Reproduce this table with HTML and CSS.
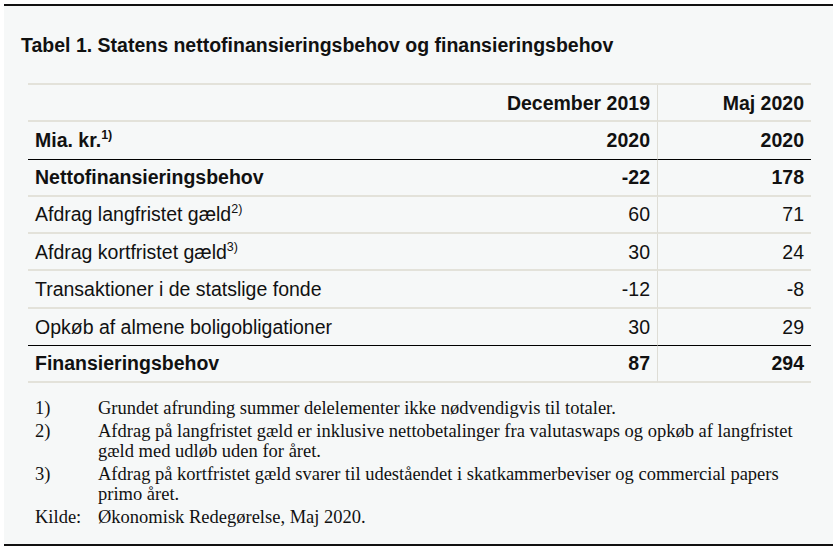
FILE: index.html
```html
<!DOCTYPE html>
<html lang="da">
<head>
<meta charset="utf-8">
<title>Tabel 1</title>
<link rel="stylesheet" href="styles.css">
</head>
<body>
<div class="figure">
  <h1 class="title">Tabel 1. Statens nettofinansieringsbehov og finansieringsbehov</h1>
  <table class="tbl">
    <colgroup>
      <col class="c-label">
      <col class="c-dec">
      <col class="c-maj">
    </colgroup>
    <tbody>
      <tr class="head">
        <td></td>
        <td class="num">December 2019</td>
        <td class="num div">Maj 2020</td>
      </tr>
      <tr class="head rule">
        <td>Mia. kr.<sup>1)</sup></td>
        <td class="num">2020</td>
        <td class="num div">2020</td>
      </tr>
      <tr class="bold">
        <td>Nettofinansieringsbehov</td>
        <td class="num">-22</td>
        <td class="num div">178</td>
      </tr>
      <tr>
        <td>Afdrag langfristet gæld<sup>2)</sup></td>
        <td class="num">60</td>
        <td class="num div">71</td>
      </tr>
      <tr>
        <td>Afdrag kortfristet gæld<sup>3)</sup></td>
        <td class="num">30</td>
        <td class="num div">24</td>
      </tr>
      <tr>
        <td>Transaktioner i de statslige fonde</td>
        <td class="num">-12</td>
        <td class="num div">-8</td>
      </tr>
      <tr class="rule">
        <td>Opkøb af almene boligobligationer</td>
        <td class="num">30</td>
        <td class="num div">29</td>
      </tr>
      <tr class="bold">
        <td>Finansieringsbehov</td>
        <td class="num">87</td>
        <td class="num div">294</td>
      </tr>
    </tbody>
  </table>
  <div class="notes">
    <div class="note"><span class="lbl">1)</span><span class="txt">Grundet afrunding summer delelementer ikke nødvendigvis til totaler.</span></div>
    <div class="note"><span class="lbl">2)</span><span class="txt">Afdrag på langfristet gæld er inklusive nettobetalinger fra valutaswaps og opkøb af langfristet gæld med udløb uden for året.</span></div>
    <div class="note"><span class="lbl">3)</span><span class="txt">Afdrag på kortfristet gæld svarer til udeståendet i skatkammerbeviser og commercial papers primo året.</span></div>
    <div class="note"><span class="lbl">Kilde:</span><span class="txt">Økonomisk Redegørelse, Maj 2020.</span></div>
  </div>
</div>
</body>
</html>
```

FILE: styles.css
```css
html, body {
  margin: 0;
  padding: 0;
  background: #ffffff;
}

body {
  padding: 4px 7px 0 4px;
  font-family: "Liberation Sans", Arial, sans-serif;
  color: #111111;
}

.figure {
  width: 829px;
  height: 542px;
  box-sizing: border-box;
  border-top: 2px solid #111;
  border-bottom: 2px solid #111;
  background: #f6f8f8;
  background-clip: padding-box;
  padding: 0 22px 0 24px;
}

.title {
  margin: 0 0 0 -7px;
  padding-top: 28px;
  height: 49px;
  font-size: 19.5px;
  font-weight: bold;
  line-height: 22px;
  box-sizing: content-box;
  white-space: nowrap;
}

.tbl {
  width: 783px;
  border-collapse: separate;
  border-spacing: 0;
  border-top: 2px solid #e3e2da;
  font-size: 19.5px;
}

.c-label { width: auto; }
.c-dec { width: 160px; }
.c-maj { width: 154px; }

.tbl td {
  height: 35.25px;
  padding: 0 7px;
  border-bottom: 2px solid #e3e2da;
  vertical-align: middle;
  white-space: nowrap;
  line-height: 22px;
}

.tbl td.num { text-align: right; }
.tbl td.div { border-left: 1px solid #deddd6; }

.tbl tr.head td,
.tbl tr.bold td { font-weight: bold; }

.tbl tr.rule td {
  border-bottom: 1px solid #000;
  height: 36.25px;
}

.tbl sup {
  font-size: 12.5px;
  line-height: 0;
  vertical-align: 8px;
  font-weight: normal;
}

.tbl tr.head sup { font-weight: bold; }

.notes {
  padding: 15px 0 0 7px;
  font-family: "Liberation Serif", "Times New Roman", serif;
  font-size: 18.5px;
  line-height: 20.5px;
  color: #111;
}

.note {
  display: grid;
  grid-template-columns: 63px 1fr;
  margin-bottom: 2px;
  width: 780px;
}
```
